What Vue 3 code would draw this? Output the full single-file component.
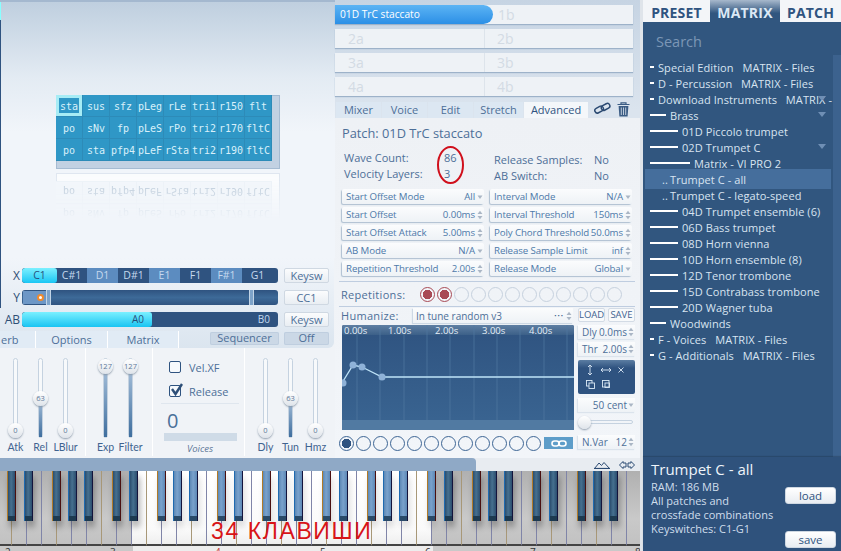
<script setup>
const cells = ['sta','sus','sfz','pLeg','rLe','tri1','r150','flt','po','sNv','fp','pLeS','rPo','tri2','r170','fltC','po','sta','pfp4','pLeF','rSta','tri2','r190','fltC']
const reflected = cells.slice(8)
const notes = [['C1','on'],['C#1','d'],['D1','l'],['D#1','d'],['E1','l'],['F1','d'],['F#1','l'],['G1','d']]
const thumbTop = v => (v === 127 ? 0 : v === 63 ? 32 : 64)
const groups = [
  { cls: 'g1', items: [['Atk',0],['Rel',63],['LBlur',0]] },
  { cls: 'g2', items: [['Exp',127],['Filter',127]] },
  { cls: 'g3', mid: true, items: [] },
  { cls: 'g4', items: [['Dly',0],['Tun',63],['Hmz',0]] }
]
const params = [
  ['Start Offset Mode','All','d'],['Interval Mode','N/A','d'],
  ['Start Offset','0.00ms','s'],['Interval Threshold','150ms','s'],
  ['Start Offset Attack','5.00ms','s'],['Poly Chord Threshold','50.0ms','s'],
  ['AB Mode','N/A','d'],['Release Sample Limit','inf','s'],
  ['Repetition Threshold','2.00s','s'],['Release Mode','Global','d']
]
const rows = [
  [0,'Special Edition   MATRIX - Files'],[0,'D - Percussion   MATRIX - Files'],[0,'Download Instruments   MATRIX - Files',1],
  [1,'Brass',1],[2,'01D Piccolo trumpet'],[2,'02D Trumpet C',1],[3,'Matrix - VI PRO 2'],
  [4,'Trumpet C - all'],[5,'Trumpet C - legato-speed'],
  [2,'04D Trumpet ensemble (6)'],[2,'06D Bass trumpet'],[2,'08D Horn vienna'],[2,'10D Horn ensemble (8)'],
  [2,'12D Tenor trombone'],[2,'15D Contrabass trombone'],[2,'20D Wagner tuba'],[1,'Woodwinds'],
  [0,'F - Voices   MATRIX - Files'],[0,'G - Additionals   MATRIX - Files']
]
const whites = Array.from({ length: 44 }, (_, i) => {
  const x = -3 + 15 * i
  return { x, lit: x >= 132 && x < 432, warm: i % 3 === 0 }
})
const blacks = []
for (let o = 0; o < 7; o++) {
  for (const d of [14, 31, 59, 75, 91]) {
    const c = -3 + 105 * o + d
    if (c < 640) blacks.push({ left: c - 4, lit: c >= 140 && c <= 435, warm: d === 14 || d === 59 })
  }
}
const octaves = [['2',5],['3',110],['4',215],['5',320],['6',425],['7',530],['8',635]]
const gridX = [15,38,62,85,108,132,155,178,202,225]
const gridLabels = [['0.00s',2],['1.00s',46],['2.00s',93],['3.00s',140],['4.00s',187]]
</script>

<template>
  <div class="app">
    <div class="main">
      <div class="top">
        <section class="left">
          <div class="stage">
            <div class="matrix">
              <div class="mgrid">
                <span v-for="(c, i) in cells" :key="i" class="cell" :class="{ sel: i === 0 }"><i>{{ c }}</i></span>
              </div>
              <div class="vbar"></div>
              <div class="hbar"></div>
            </div>
            <div class="reflect" aria-hidden="true">
              <div class="matrix flat">
                <div class="mgrid">
                  <span v-for="(c, i) in reflected" :key="i" class="cell"><i>{{ c }}</i></span>
                </div>
                <div class="vbar"></div>
                <div class="hbar"></div>
              </div>
            </div>
          </div>
          <div class="controls">
            <div class="crow">
              <span class="clab">X</span>
              <div class="bar notes">
                <span v-for="n in notes" :key="n[0]" class="note" :class="n[1]">{{ n[0] }}</span>
              </div>
              <button class="cbtn">Keysw</button>
            </div>
            <div class="crow">
              <span class="clab">Y</span>
              <div class="bar ybar">
                <span class="ystart"><b class="dot"></b></span>
                <span class="yh h1"></span>
                <span class="yh h2"></span>
              </div>
              <button class="cbtn">CC1</button>
            </div>
            <div class="crow ab">
              <span class="clab">AB</span>
              <div class="bar abbar">
                <span class="a0">A0</span>
                <span class="b0">B0</span>
              </div>
              <button class="cbtn">Keysw</button>
            </div>
            <div class="tabrow">
              <span class="ltab t1">erb</span>
              <span class="ltab t2">Options</span>
              <span class="ltab t3">Matrix</span>
              <span class="seq">Sequencer</span>
              <span class="seq off">Off</span>
            </div>
          </div>
          <div class="mixer">
            <div v-for="g in groups" :key="g.cls" class="grp" :class="g.cls">
              <template v-if="g.mid">
                <label class="chk"><span class="box"></span>Vel.XF</label>
                <label class="chk"><span class="box"><svg width="15" height="15" viewBox="0 0 15 15"><path d="M3 6l3.5 5L13 1" fill="none" stroke="#2e4f78" stroke-width="2.4"/></svg></span>Release</label>
                <div class="voices">
                  <div class="vnum">0</div>
                  <div class="vbarr"></div>
                  <div class="vlab">Voices</div>
                </div>
              </template>
              <div v-for="s in g.items" :key="s[0]" class="slider">
                <div class="track">
                  <div v-if="s[1]" class="fill" :style="{ top: thumbTop(s[1]) + 7 + 'px' }"></div>
                  <div class="thumb" :style="{ top: thumbTop(s[1]) + 'px' }">{{ s[1] }}</div>
                </div>
                <div class="slab">{{ s[0] }}</div>
              </div>
            </div>
          </div>
        </section>

        <section class="mid">
          <div class="slots">
            <div class="slot">
              <div class="pill">01D TrC staccato</div>
              <div class="sb first">1b</div>
            </div>
            <div class="slot"><div class="sa">2a</div><div class="sb">2b</div></div>
            <div class="slot"><div class="sa">3a</div><div class="sb">3b</div></div>
            <div class="slot"><div class="sa">4a</div><div class="sb">4b</div></div>
          </div>
          <div class="mtabs">
            <span class="mtab w1">Mixer</span>
            <span class="mtab w1">Voice</span>
            <span class="mtab w1">Edit</span>
            <span class="mtab w2">Stretch</span>
            <span class="mtab w3 act">Advanced</span>
            <svg class="link" width="17" height="13" viewBox="0 0 17 13"><g fill="none" stroke="#2b4a72" stroke-width="1.5"><rect x="0.8" y="5.2" width="9" height="5" rx="2.5" transform="rotate(-28 5 8)"/><rect x="7.2" y="2.2" width="9" height="5" rx="2.5" transform="rotate(-28 12 5)"/></g></svg>
            <svg class="trash" width="13" height="15" viewBox="0 0 13 15"><path d="M0.5 2.5h12M4 2.3V0.8h5v1.5" fill="none" stroke="#3b5c84" stroke-width="1.2"/><path d="M1.6 4h9.8l-0.8 10.5H2.4z" fill="#3b5c84"/><path d="M4.3 5.5v7.5M6.5 5.5v7.5M8.7 5.5v7.5" stroke="#dfe7f0" stroke-width="0.8"/></svg>
          </div>
          <div class="adv">
            <div class="ptitle">Patch: 01D TrC staccato</div>
            <div class="info">
              <div class="icol ic1">
                <div class="irow"><span>Wave Count:</span><b>86</b></div>
                <div class="irow"><span>Velocity Layers:</span><b>3</b></div>
                <span class="ring"></span>
              </div>
              <div class="icol ic2">
                <div class="irow"><span>Release Samples:</span><b>No</b></div>
                <div class="irow"><span>AB Switch:</span><b>No</b></div>
              </div>
            </div>
            <div class="params">
              <div v-for="p in params" :key="p[0]" class="param">
                <span>{{ p[0] }}</span>
                <em>{{ p[1] }}</em>
                <svg v-if="p[2] === 'd'" class="ar" width="6" height="10" viewBox="0 0 6 10"><path d="M0.5 3.5h5L3 7z" fill="#aab6c5"/></svg>
                <svg v-else class="ar" width="6" height="10" viewBox="0 0 6 10"><path d="M0.5 4L3 0.8 5.5 4zM0.5 6L3 9.2 5.5 6z" fill="#aab6c5"/></svg>
              </div>
            </div>
            <div class="reps">
              <span class="replab">Repetitions:</span>
              <span v-for="n in 12" :key="n" class="rc" :class="{ on: n < 3 }"></span>
            </div>
            <div class="hum">
              <div class="hleft">
                <div class="hhead">
                  <span class="hlab">Humanize:</span>
                  <div class="hsel">
                    <span>In tune random v3</span>
                    <i class="dots">•••</i>
                    <svg width="6" height="10" viewBox="0 0 6 10"><path d="M0.5 4L3 0.8 5.5 4zM0.5 6L3 9.2 5.5 6z" fill="#aab6c5"/></svg>
                  </div>
                </div>
                <svg class="graph" width="232" height="105" viewBox="0 0 232 105">
                  <defs>
                    <linearGradient id="gbg" x1="0" y1="0" x2="0" y2="1"><stop offset="0" stop-color="#2f5380"/><stop offset="1" stop-color="#3a6592"/></linearGradient>
                    <linearGradient id="ghd" x1="0" y1="0" x2="0" y2="1"><stop offset="0" stop-color="#5f7fa3"/><stop offset="1" stop-color="#3c6088"/></linearGradient>
                  </defs>
                  <rect width="232" height="105" rx="2" fill="url(#gbg)"/>
                  <rect width="232" height="10" rx="2" fill="url(#ghd)"/>
                  <rect y="95" width="232" height="10" fill="#517aa2"/>
                  <path v-for="x in gridX" :key="x" :d="`M${x} 0V95`" stroke="#517aa2" stroke-width="0.7"/>
                  <text v-for="l in gridLabels" :key="l[0]" :x="l[1]" y="9" class="gtxt">{{ l[0] }}</text>
                  <polyline points="0,58 11,40 20,42 40,52 232,52" fill="none" stroke="#bfe4f8" stroke-width="1.3"/>
                  <g fill="#8fb2d8"><circle cx="1" cy="58" r="3.5"/><circle cx="11" cy="40" r="3.5"/><circle cx="20" cy="42" r="3.5"/><circle cx="40" cy="52" r="3.5"/></g>
                </svg>
                <div class="vars">
                  <span v-for="n in 12" :key="n" class="vc" :class="{ on: n === 1 }"></span>
                  <span class="lnk"><svg width="16" height="7" viewBox="0 0 16 7"><g fill="none" stroke="#fff" stroke-width="1.6"><rect x="1" y="1" width="7" height="5" rx="2.5"/><rect x="8" y="1" width="7" height="5" rx="2.5"/></g></svg></span>
                </div>
              </div>
              <div class="hright">
                <div class="lsrow"><span class="ls">LOAD</span><span class="ls">SAVE</span></div>
                <div class="rbox b1"><span>Dly</span><em>0.0ms</em><svg width="6" height="10" viewBox="0 0 6 10"><path d="M0.5 4L3 0.8 5.5 4zM0.5 6L3 9.2 5.5 6z" fill="#aab6c5"/></svg></div>
                <div class="rbox b2"><span>Thr</span><em>2.00s</em><svg width="6" height="10" viewBox="0 0 6 10"><path d="M0.5 4L3 0.8 5.5 4zM0.5 6L3 9.2 5.5 6z" fill="#aab6c5"/></svg></div>
                <div class="tools">
                  <svg width="57" height="34" viewBox="0 0 57 34">
                    <g fill="none" stroke="#dceaf7" stroke-width="0.9">
                      <path d="M12 5V15M10 7l2-2 2 2M10 13l2 2 2-2"/>
                      <path d="M23 10H33M25 8l-2 2 2 2M31 8l2 2-2 2"/>
                      <path d="M40.5 7.5l5 5M45.5 7.5l-5 5"/>
                      <rect x="8.5" y="20.5" width="5.5" height="5.5"/><rect x="11" y="23" width="5.5" height="5.5" fill="#2f5380"/>
                      <rect x="24.5" y="20.5" width="6.5" height="6.5"/><rect x="27" y="23" width="4.5" height="4.5"/>
                    </g>
                  </svg>
                </div>
                <div class="rbox b3"><em>50 cent</em><svg width="6" height="10" viewBox="0 0 6 10"><path d="M0.5 3.5h5L3 7z" fill="#aab6c5"/></svg></div>
                <div class="hslider"><span></span></div>
                <div class="rbox b4"><span>N.Var</span><em>12</em><svg width="6" height="10" viewBox="0 0 6 10"><path d="M0.5 4L3 0.8 5.5 4zM0.5 6L3 9.2 5.5 6z" fill="#aab6c5"/></svg></div>
              </div>
            </div>
          </div>
        </section>
      </div>

      <div class="strip">
        <div class="scroll"></div>
        <svg width="16" height="8" viewBox="0 0 16 8"><path d="M0.5 7.5L5 2l2.5 2.5L10 1.5l5.5 6z" fill="none" stroke="#2b4a72"/><path d="M0 7.5h16" stroke="#2b4a72" stroke-width="1.2"/></svg>
        <svg width="16" height="8" viewBox="0 0 16 8"><path d="M0.5 4L4 0.5V2h3v4H4v1.5zM15.5 4L12 0.5V2H9v4h3v1.5z" fill="none" stroke="#2b4a72"/></svg>
      </div>
      <div class="keys">
        <span v-for="w in whites" :key="w.x" class="wk" :class="{ lit: w.lit, warm: w.warm }"></span>
        <span v-for="b in blacks" :key="b.left" class="bk" :class="{ lit: b.lit, warm: b.warm }" :style="{ left: b.left + 'px' }"><u></u></span>
        <div class="redtxt">34 КЛАВИШИ</div>
      </div>
      <div class="octs">
        <span class="range"></span>
        <span v-for="o in octaves" :key="o[0]" class="oct" :class="{ mk: o[0] === '4' }" :style="{ left: o[1] + 'px' }">{{ o[0] }}</span>
      </div>
    </div>

    <aside class="side">
      <div class="stabs">
        <span class="stab s1">PRESET</span>
        <span class="stab s2 act">MATRIX</span>
        <span class="stab s3">PATCH</span>
      </div>
      <div class="search">Search</div>
      <div class="listwrap">
        <div class="list">
          <div v-for="(r, i) in rows" :key="i" class="row" :class="['lv' + r[0]]">
            <span v-if="r[0] < 4" class="dash"></span>
            <span v-else class="ddots">..</span>
            <span class="rtxt">{{ r[1] }}</span>
            <svg v-if="r[2]" class="chev" width="10" height="5" viewBox="0 0 10 5"><path d="M1 0h8L5 5z" fill="#6f8fb5"/></svg>
          </div>
        </div>
        <div class="lscroll"></div>
      </div>
      <div class="details">
        <div class="dtext">
          <div class="dname">Trumpet C - all</div>
          <div>RAM: 186 MB</div>
          <div>All patches and</div>
          <div>crossfade combinations</div>
          <div>Keyswitches: C1-G1</div>
        </div>
        <div class="dbtns">
          <button class="dbtn">load</button>
          <button class="dbtn">save</button>
        </div>
      </div>
    </aside>
  </div>
</template>

<style>
html, body { margin: 0; padding: 0; background: #e9edf2; overflow: hidden; }
</style>

<style scoped>
.app { width: 841px; height: 551px; display: flex; overflow: hidden; font-family: "Open Sans", sans-serif; font-size: 11px; color: #4d6f98; background: #dfe4ea; }
.main { width: 640px; flex: none; display: flex; flex-direction: column; position: relative; }
.top { display: flex; height: 458px; flex: none; }
.left { width: 335px; flex: none; display: flex; flex-direction: column; background: #f0f3f7; }
.stage { height: 258px; flex: none; box-sizing: border-box; padding: 93px 0 0 56px; border-top: 2px solid #a4b8cf; background: linear-gradient(#8ff 0 18px, #2f5380 18px) left top / 1px 100% no-repeat, linear-gradient(#bfcfdf 0, #e3ebf3 75px, #f1f5fa 130px); }
.matrix { width: 224px; height: 74px; display: grid; grid-template-columns: 216px 8px; grid-template-rows: 66px 8px; background: #c2d1e2; box-shadow: inset 0 0 0 1px #a5bbd2; }
.mgrid { display: grid; grid-template-columns: repeat(8, 27px); grid-auto-rows: 22px; background: #2f97c6; }
.cell { display: flex; align-items: center; justify-content: center; padding-top: 2px; border-right: 1px solid #2d8bb8; border-bottom: 1px solid #2d8bb8; box-sizing: border-box; color: #d8f0fa; font-family: "DejaVu Sans Mono", monospace; font-size: 10px; overflow: hidden; white-space: nowrap; }
.cell i { font-style: normal; }
.cell.sel { background: #2f97c6; box-shadow: inset 0 0 0 3px #a7ecf5; }
.reflect { height: 52px; margin-top: 4px; transform: scaleY(-1); opacity: 0.7; -webkit-mask-image: linear-gradient(to top, #000 4px, transparent 46px); mask-image: linear-gradient(to top, #000 4px, transparent 46px); }
.flat { height: 52px; grid-template-rows: 44px 8px; background: #fff; box-shadow: inset 0 0 0 1px #d8e1ec; }
.flat .mgrid { background: #f3f7fb; }
.flat .cell { color: #9fb4c8; border-color: #eaf0f6; }
.controls { flex: none; height: 90px; box-sizing: border-box; padding-top: 10px; background: linear-gradient(#2f5380, #2f5380) left top / 1px 50px no-repeat, linear-gradient(#f1f5fa, #dbe5ef); border-bottom-right-radius: 6px; margin-right: 1px; }
.crow { display: flex; align-items: center; height: 15px; margin-bottom: 7px; }
.clab { width: 22px; flex: none; text-align: right; padding-right: 2px; box-sizing: border-box; font-size: 12px; color: #2f4f75; }
.crow .bar { width: 256px; height: 15px; margin-right: 6px; flex: none; border-radius: 3px; background: #2f5380; position: relative; overflow: hidden; }
.cbtn { width: 45px; height: 15px; padding: 0; border: 1px solid #cfd8e2; border-radius: 2px; background: linear-gradient(#fbfcfd, #e9eef3); color: #4d6f98; font: 11px "Open Sans", sans-serif; line-height: 12px; }
.notes { display: flex; }
.note { width: 31px; flex: none; text-align: center; font-size: 10.5px; line-height: 15px; color: #c5d9ee; }
.note.l { background: #5c8cc0; }
.note.on { width: 35px; margin-right: -1px; border-radius: 3px; background: linear-gradient(#7cf0ff, #19c6f4); color: #27507c; }
.ystart { position: absolute; left: 1px; top: 1px; bottom: 1px; width: 24px; background: #6d97c6; }
.dot { position: absolute; right: 3px; top: 3px; width: 7px; height: 7px; border-radius: 50%; background: #fff; border: 2px solid #f08a2c; box-sizing: border-box; }
.ybar { background: linear-gradient(#2f5380, #3d6a98 50%, #2f5380) !important; }
.yh { position: absolute; top: 0; bottom: 0; width: 5px; background: #7da3c9; border-left: 1px solid #c2d4e6; border-right: 1px solid #c2d4e6; box-sizing: border-box; }
.h1 { left: 24px; }
.h2 { left: 227px; }
.a0, .b0 { position: absolute; top: 0; line-height: 15px; font-size: 10px; }
.a0 { left: 0; width: 130px; height: 15px; box-sizing: border-box; padding-right: 8px; text-align: right; background: linear-gradient(#7bf0ff, #19c4f2); border-radius: 3px; color: #27507c; }
.b0 { right: 8px; color: #c5d9ee; }
.tabrow { display: flex; height: 18px; margin-top: -3px; align-items: flex-start; }
.ltab { height: 17px; box-sizing: border-box; background: #e1ebf5; font-size: 11px; line-height: 17px; text-align: center; border-right: 1px solid #fff; }
.t1 { width: 36px; text-align: left; padding-left: 1px; }
.t2 { width: 72px; }
.t3 { width: 71px; margin-right: 31px; }
.seq { width: 69px; height: 13px; margin-top: 1px; border-radius: 2px; background: #cbd8e6; box-shadow: inset 0 0 0 1px #bfcedf; text-align: center; line-height: 12px; margin-right: 5px; }
.off { width: 45px; }
.mixer { flex: 1; display: flex; }
.grp { display: flex; box-sizing: border-box; border-right: 1px solid #fff; height: 108px; }
.g1 { width: 86px; padding-left: 3px; }
.g2 { width: 67px; padding-left: 7px; }
.g3 { width: 92px; display: block; padding: 7px 8px 0 9px; }
.g4 { width: 90px; padding-left: 8px; border: 0; }
.slider { width: 25px; display: flex; flex-direction: column; align-items: center; }
.track { position: relative; width: 5px; height: 80px; margin-top: 10px; border: 1px solid #c5d2e0; border-radius: 3px; background: #f7f9fb; box-sizing: border-box; }
.fill { position: absolute; left: 0; right: 0; bottom: 0; background: linear-gradient(#a9c2dc, #3f6e9e); }
.thumb { position: absolute; left: -6px; width: 15px; height: 15px; border-radius: 50%; background: linear-gradient(#fff, #dfe4ea); box-shadow: 0 1px 2px #8a98a8; font-size: 7.5px; line-height: 15px; text-align: center; color: #5d7898; }
.slab { margin-top: 2px; font: 10.5px/14px Lato, sans-serif; white-space: nowrap; color: #3f6390; }
.chk { display: flex; align-items: center; height: 24px; font-size: 11px; padding-left: 7px; }
.box { width: 12px; height: 12px; border: 1px solid #2f5380; border-radius: 2px; margin-right: 8px; box-sizing: border-box; position: relative; background: #f6f9fc; flex: none; }
.box svg { position: absolute; left: -1px; top: -3px; }
.voices { border-top: 1px solid #dfe6ee; padding: 5px 0 0 0; margin-left: -1px; margin-right: -3px; }
.vnum { font-size: 20px; line-height: 24px; padding-left: 6px; color: #4a7099; }
.vbarr { height: 8px; margin: 0 2px 0 3px; background: #cfdbe7; }
.vlab { font-size: 9.5px; font-style: italic; text-align: center; line-height: 13px; margin-top: 1px; color: #5d7898; }

.mid { width: 305px; flex: none; display: flex; flex-direction: column; background: linear-gradient(#c6d4e3, #dbe4ee 110px); }
.slots { padding: 5px 7px 0 0; display: flex; flex-direction: column; gap: 5px; }
.slot { height: 19px; display: flex; background: #eef2f6; box-shadow: 0 1px 1px #9db2c9; font-size: 14px; line-height: 19px; color: #d3dbe4; }
.sa { width: 150px; box-sizing: border-box; padding-left: 13px; border-right: 1px solid #dde4eb; }
.sb { padding-left: 12px; }
.sb.first { padding-left: 5px; }
.pill { width: 158px; box-sizing: border-box; padding-left: 5px; border-radius: 0 10px 10px 0; background: linear-gradient(#5cb4f4, #2b8fe6); color: #fff; font-size: 10.2px; }
.mtabs { display: flex; align-items: flex-end; height: 16px; margin-top: 6px; padding-left: 1px; position: relative; }
.mtab { height: 16px; box-sizing: border-box; background: #dce7f2; text-align: center; line-height: 15px; font-size: 11px; margin-right: 1px; }
.w1 { width: 45px; }
.w2 { width: 49px; }
.w3 { width: 64px; }
.act { background: #f4f7fa; color: #2f5380; }
.link { margin: 0 0 3px 5px; }
.trash { margin: 0 0 1px 6px; }
.adv { flex: 1; box-sizing: border-box; padding: 6px 8px 0 7px; background: linear-gradient(#eef1f5, #f2f5f9); }
.ptitle { font-size: 12.8px; line-height: 18px; color: #4d6f98; }
.info { display: flex; margin-top: 8px; height: 32px; font-size: 11px; }
.icol { position: relative; }
.ic1 { width: 150px; }
.ic2 { margin-top: 2px; flex: 1; }
.irow { display: flex; height: 16px; line-height: 16px; padding-left: 2px; }
.irow span { flex: none; width: 100px; }
.irow b { font-weight: 400; color: #4d6f98; }
.ring { position: absolute; left: 95px; top: -4px; width: 27px; height: 38px; border: 2px solid #d0101c; border-radius: 50%; box-sizing: border-box; }
.params { display: grid; grid-template-columns: 142px 142px; column-gap: 6px; row-gap: 3px; margin-top: 7px; }
.param { height: 15px; display: flex; align-items: center; padding: 0 1px 0 4px; box-sizing: border-box; background: linear-gradient(#fbfcfd, #eef2f6); box-shadow: -1px 1px 1px #aebfd1; border-radius: 2px; font: 9.7px "Open Sans", sans-serif; letter-spacing: -0.1px; color: #4d79a9; white-space: nowrap; }
.param em, .rbox em { margin-left: auto; font-style: normal; }
.param svg { margin-left: 2px; flex: none; }
.reps { display: flex; align-items: center; height: 24px; margin: 5px -3px 0 -3px; border-top: 1px solid #bfcde0; border-bottom: 1px solid #bfcde0; padding-left: 2px; }
.replab { width: 79px; font-size: 11px; flex: none; letter-spacing: 0.3px; }
.rc { width: 15px; height: 15px; border: 1px solid #c6d1de; border-radius: 50%; margin-right: 2px; box-sizing: border-box; flex: none; }
.rc.on { border-color: #a84a55; background: radial-gradient(circle, #a84a55 0 4.5px, #f2f5f9 5px); }
.hum { display: flex; gap: 4px; }
.hleft { width: 232px; flex: none; }
.hhead { display: flex; height: 17px; align-items: center; }
.hlab { width: 72px; margin-left: -1px; font-size: 11px; flex: none; letter-spacing: 0.3px; }
.hsel { width: 160px; height: 15px; display: flex; align-items: center; box-sizing: border-box; padding: 0 1px 0 3px; background: linear-gradient(#fbfcfd, #eef2f6); box-shadow: -1px 1px 1px #cdd8e4; font-size: 10px; }
.dots { margin-left: auto; margin-right: 2px; font-style: normal; font-size: 6px; letter-spacing: 1px; color: #3b5f8b; }
.graph { display: block; margin-top: 1px; }
.gtxt { font: 9.5px "Open Sans", sans-serif; fill: #e6eff8; }
.vars { display: flex; align-items: center; height: 14px; margin-top: 6px; margin-left: -3px; }
.vc { width: 15px; height: 15px; border: 1px solid #3d6594; border-radius: 50%; box-sizing: border-box; margin-right: 2px; flex: none; }
.vc.on { background: radial-gradient(circle, #2f5380 0 4.5px, #f2f5f9 5px); }
.lnk { width: 29px; height: 12px; margin-left: 1px; background: #5d9dc9; display: flex; align-items: center; justify-content: center; }
.hright { width: 57px; flex: none; display: flex; flex-direction: column; margin-top: 1px; }
.lsrow { display: flex; justify-content: space-between; }
.ls { width: 27px; height: 14px; border: 1px solid #d3dbe5; box-sizing: border-box; border-radius: 2px; text-align: center; font-size: 9.5px; line-height: 12px; background: #f8fafb; color: #3f6390; }
.rbox { height: 14px; display: flex; align-items: center; padding: 0 1px 0 4px; box-sizing: border-box; background: linear-gradient(#fbfcfd, #eef2f6); box-shadow: -1px 1px 1px #dbe3ec; font-size: 10px; white-space: nowrap; }
.rbox svg { margin-left: 1px; flex: none; }
.b1 { margin-top: 3px; }
.b2 { margin-top: 3px; }
.tools { height: 34px; margin-top: 4px; background: linear-gradient(#5b7da2 0, #2f5380 8px, #2f5380); border-radius: 2px; }
.tools svg { display: block; }
.b3 { margin-top: 4px; }
.hslider { height: 14px; margin-top: 3px; display: flex; align-items: center; position: relative; }
.hslider::before { content: ""; position: absolute; left: 2px; right: 2px; top: 5px; height: 4px; border: 1px solid #c5d2e0; border-radius: 3px; box-sizing: border-box; }
.hslider span { width: 13px; height: 13px; border-radius: 50%; background: linear-gradient(#fff, #dfe4ea); box-shadow: 0 1px 2px #8a98a8; position: relative; }
.b4 { margin-top: 6px; }

.strip { height: 13px; flex: none; display: flex; align-items: center; background: #e8ecf1; }
.scroll { width: 476px; height: 13px; background: #8fa9c6; border-radius: 0 4px 0 0; margin-right: 118px; flex: none; }
.strip svg + svg { margin-left: 9px; }
.strip svg { flex: none; }
.keys { height: 75px; flex: none; position: relative; display: flex; overflow: hidden; margin-left: -3px; }
.wk { width: 15px; flex: none; box-sizing: border-box; border-right: 1px solid #8085a8; border-bottom: 2px solid #444; background: linear-gradient(#b0b0b0, #c9c9c9 65%, #c2c2c2); }
.wk.warm { border-right-color: #a89878; }
.wk.lit { background: linear-gradient(#fff, #fafafa 80%, #efefef); }
.bk { position: absolute; top: 0; margin-left: 3px; width: 9px; height: 50px; box-sizing: border-box; background: linear-gradient(90deg, #2b4d6e, #46708f 45%, #2b4d6e); border-left: 1px solid #1f6ab0; border-right: 1px solid #14143c; box-shadow: 2px 6px 6px rgba(0,0,0,0.3); }
.bk.warm { border-left-color: #b07a28; border-right-color: #4a1010; }
.bk u { position: absolute; left: 0; right: 0; bottom: 0; height: 5px; background: #1d3a50; }
.bk.lit { background: linear-gradient(90deg, #5d88b5, #7aa2cc 45%, #5d88b5); box-shadow: 2px 6px 6px rgba(0,0,0,0.12); }
.bk.lit u { background: #2a4a68; }
.redtxt { position: absolute; left: 214px; top: 47px; font: 23px/26px "Liberation Sans", sans-serif; color: #d81418; letter-spacing: 1.6px; white-space: nowrap; }
.octs { flex: 1; position: relative; overflow: hidden; background: #c9c9c9; }
.range { position: absolute; left: 133px; width: 300px; top: 0; bottom: 0; background: #ededed; }
.oct { position: absolute; top: 0; font-size: 10px; line-height: 12px; color: #333; }
.mk { color: #c83030; }

.side { width: 198px; margin-left: 3px; flex: none; display: flex; flex-direction: column; background: #31567f; position: relative; }
.stabs { display: flex; height: 22px; flex: none; background: #f3f5f8; font-size: 14px; font-weight: 700; color: #2f5380; line-height: 25px; letter-spacing: 0.2px; }
.stab { text-align: center; }
.s1 { width: 67px; }
.s2 { width: 70px; }
.s3 { flex: 1; }
.stab.act { background: linear-gradient(#a7b8cc, #31567f 60%); color: #dbe8f5; }
.search { height: 33px; flex: none; padding-left: 13px; font-size: 14.5px; line-height: 40px; color: #7c96b6; }
.listwrap { flex: 1; display: flex; min-height: 0; }
.list { flex: 1; min-width: 0; padding-top: 4px; overflow: hidden; }
.lscroll { width: 8px; flex: none; background: #3c628e; }
.row { display: flex; align-items: center; height: 16px; position: relative; color: #d8e4f1; font-size: 11px; letter-spacing: 0.08px; white-space: pre; }
.dash { height: 2px; background: #fff; margin-left: 7px; margin-right: 4px; flex: none; }
.lv0 .dash { width: 4px; }
.lv1 .dash { width: 16px; }
.lv2 .dash { width: 28px; }
.lv3 .dash { width: 40px; }
.ddots { width: 8px; margin-left: 19px; color: #d8e4f1; }
.lv4 { height: 20px; margin: -2px 2px -2px 2px; background: #456e9c; }
.lv4 .ddots { margin-left: 17px; }
.chev { position: absolute; right: 6px; top: 5px; }
.details { height: 94px; flex: none; display: flex; background: #2f527c; box-shadow: 0 -1px 1px rgba(0,0,0,0.15); box-sizing: border-box; padding: 1px 5px 0 8px; }
.dtext { width: 134px; flex: none; line-height: 14px; font-size: 11px; color: #d0deec; white-space: nowrap; }
.dname { font-size: 15px; line-height: 22px; color: #eef4fa; }
.dbtns { flex: 1; display: flex; flex-direction: column; align-items: flex-end; padding-top: 29px; }
.dbtn { width: 51px; height: 17px; padding: 0; border: 1px solid #cfd8e2; border-radius: 3px; background: linear-gradient(#fff, #e9edf2); color: #2f5380; font: 11.5px "Open Sans", sans-serif; line-height: 14px; }
.dbtn + .dbtn { margin-top: 27px; }
</style>
